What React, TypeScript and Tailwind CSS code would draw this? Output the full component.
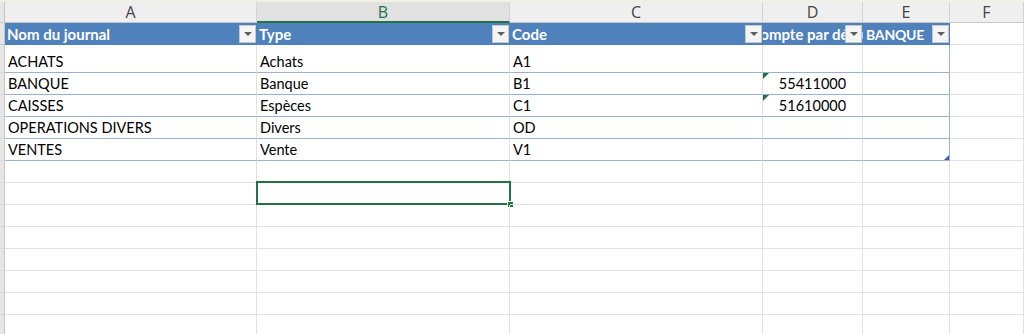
import React from 'react';

const font = { fontFamily: 'Lato, "Liberation Sans", sans-serif' };

// x borders at 4, 256, 509, 762, 862, 949
const widths = ['w-[5px]', 'w-[252px]', 'w-[253px]', 'w-[253px]', 'w-[100px]', 'w-[87px]'];

const rows = [
  { a: 'ACHATS', b: 'Achats', c: 'A1', d: '', flag: false, h: 'h-[28px]' },
  { a: 'BANQUE', b: 'Banque', c: 'B1', d: '55411000', flag: true, h: 'h-[22px]' },
  { a: 'CAISSES', b: 'Espèces', c: 'C1', d: '51610000', flag: true, h: 'h-[22px]' },
  { a: 'OPERATIONS DIVERS', b: 'Divers', c: 'OD', d: '', flag: false, h: 'h-[22px]' },
  { a: 'VENTES', b: 'Vente', c: 'V1', d: '', flag: false, h: 'h-[22px]' },
];

function FilterButton() {
  return (
    <div className="absolute right-[1px] top-[2px] flex h-[18px] w-[17px] items-center justify-center border border-[#c8c8c8] bg-[#f4f4f4]">
      <div className="h-0 w-0 border-x-[4px] border-t-[4px] border-x-transparent border-t-[#5f5f5f]" />
    </div>
  );
}

function ColumnHeader() {
  const letters = ['A', 'B', 'C', 'D', 'E', 'F'];
  return (
    <div className="flex h-[21px]">
      <div className="w-[5px] shrink-0 border-b border-r border-[#c6c6c6] bg-[#e6e6e6]" />
      {letters.map((l, i) => {
        const sel = l === 'B';
        return (
          <div
            key={l}
            className={`flex shrink-0 items-center justify-center border-r text-[16px] ${
              i === 5 ? 'flex-1' : widths[i + 1]
            } ${
              sel
                ? 'border-b-2 border-r-[#d4d4d4] border-b-[#217346] bg-[#e1e1e1] text-[#217346]'
                : 'border-b border-[#d4d4d4] border-b-[#c6c6c6] bg-[#efefef] text-[#444]'
            }`}
            style={{ fontFamily: '"Open Sans", "Noto Sans", sans-serif' }}
          >
            {l}
          </div>
        );
      })}
    </div>
  );
}

function TableHeader() {
  const heads = ['Nom du journal', 'Type', 'Code'];
  return (
    <div className="flex h-[22px]">
      <div className="w-[5px] shrink-0 border-b border-r border-[#c6c6c6] bg-[#e6e6e6]" />
      {heads.map((h, i) => (
        <div
          key={h}
          className={`relative flex shrink-0 items-center bg-[#4f81bd] pl-[2px] text-[15px] font-bold text-white ${widths[i + 1]}`}
        >
          <span>{h}</span>
          <FilterButton />
        </div>
      ))}
      <div className="relative flex w-[100px] shrink-0 items-center justify-center overflow-hidden whitespace-nowrap bg-[#4f81bd] text-[15px] font-bold text-white">
        <span className="shrink-0">Compte par défaut</span>
        <FilterButton />
      </div>
      <div className="relative flex w-[87px] shrink-0 items-center bg-[#4f81bd] pl-[3px] text-[14px] font-bold tracking-[-0.2px] text-white">
        <span>BANQUE</span>
        <FilterButton />
      </div>
      <div className="flex-1 border-b border-r border-[#e1e1e1] bg-white" />
    </div>
  );
}

function DataRow({ r }: { r: (typeof rows)[number] }) {
  return (
    <div className={`flex ${r.h}`}>
      <div className="w-[5px] shrink-0 border-b border-r border-[#c6c6c6] border-b-[#d9d9d9] bg-[#e6e6e6]" />
      {[r.a, r.b, r.c].map((t, i) => (
        <div
          key={i}
          className={`flex shrink-0 items-end border-b border-r border-[#e1e1e1] border-b-[#95b3d7] pl-[3px] text-[14.5px] leading-[20px] text-black ${widths[i + 1]}`}
        >
          <span>{t}</span>
        </div>
      ))}
      <div className="relative flex w-[100px] shrink-0 items-end justify-center border-b border-r border-[#e1e1e1] border-b-[#95b3d7] text-[14.5px] leading-[20px] text-black">
        {r.flag && (
          <div className="absolute left-0 top-0 h-0 w-0 border-r-[6px] border-t-[6px] border-r-transparent border-t-[#1e7145]" />
        )}
        {r.d && <span>{r.d}</span>}
      </div>
      <div className="w-[87px] shrink-0 border-b border-r border-[#95b3d7]" />
      <div className="flex-1 border-b border-r border-[#e1e1e1]" />
    </div>
  );
}

function EmptyRow({ selected, last }: { selected?: boolean; last?: boolean }) {
  return (
    <div className="flex h-[22px]">
      <div className="w-[5px] shrink-0 border-b border-r border-[#c6c6c6] border-b-[#d9d9d9] bg-[#e6e6e6]" />
      {widths.slice(1).map((w, i) => (
        <div key={i} className={`relative shrink-0 border-b border-r border-[#e1e1e1] ${w}`}>
          {selected && i === 1 && (
            <div className="absolute -left-[1px] -right-[2px] -top-[2px] -bottom-[1px] border-2 border-[#217346]">
              <div className="absolute -bottom-[5px] -right-[5px] h-[7px] w-[7px] border border-white bg-[#217346]" />
            </div>
          )}
          {last && i === 4 && (
            <div className="absolute -top-[6px] right-0 h-0 w-0 border-b-[5px] border-l-[5px] border-b-[#3d5fa8] border-l-transparent" />
          )}
        </div>
      ))}
      <div className="flex-1 border-b border-r border-[#e1e1e1]" />
    </div>
  );
}

export default function App() {
  return (
    <div className="h-[334px] w-[1024px] overflow-hidden bg-white" style={font}>
      <div className="h-[2px] bg-[#eef1e6]" />
      <ColumnHeader />
      <TableHeader />
      {rows.map((r) => (
        <DataRow key={r.a} r={r} />
      ))}
      <EmptyRow last />
      <EmptyRow selected />
      <EmptyRow />
      <EmptyRow />
      <EmptyRow />
      <EmptyRow />
      <EmptyRow />
      <EmptyRow />
    </div>
  );
}
